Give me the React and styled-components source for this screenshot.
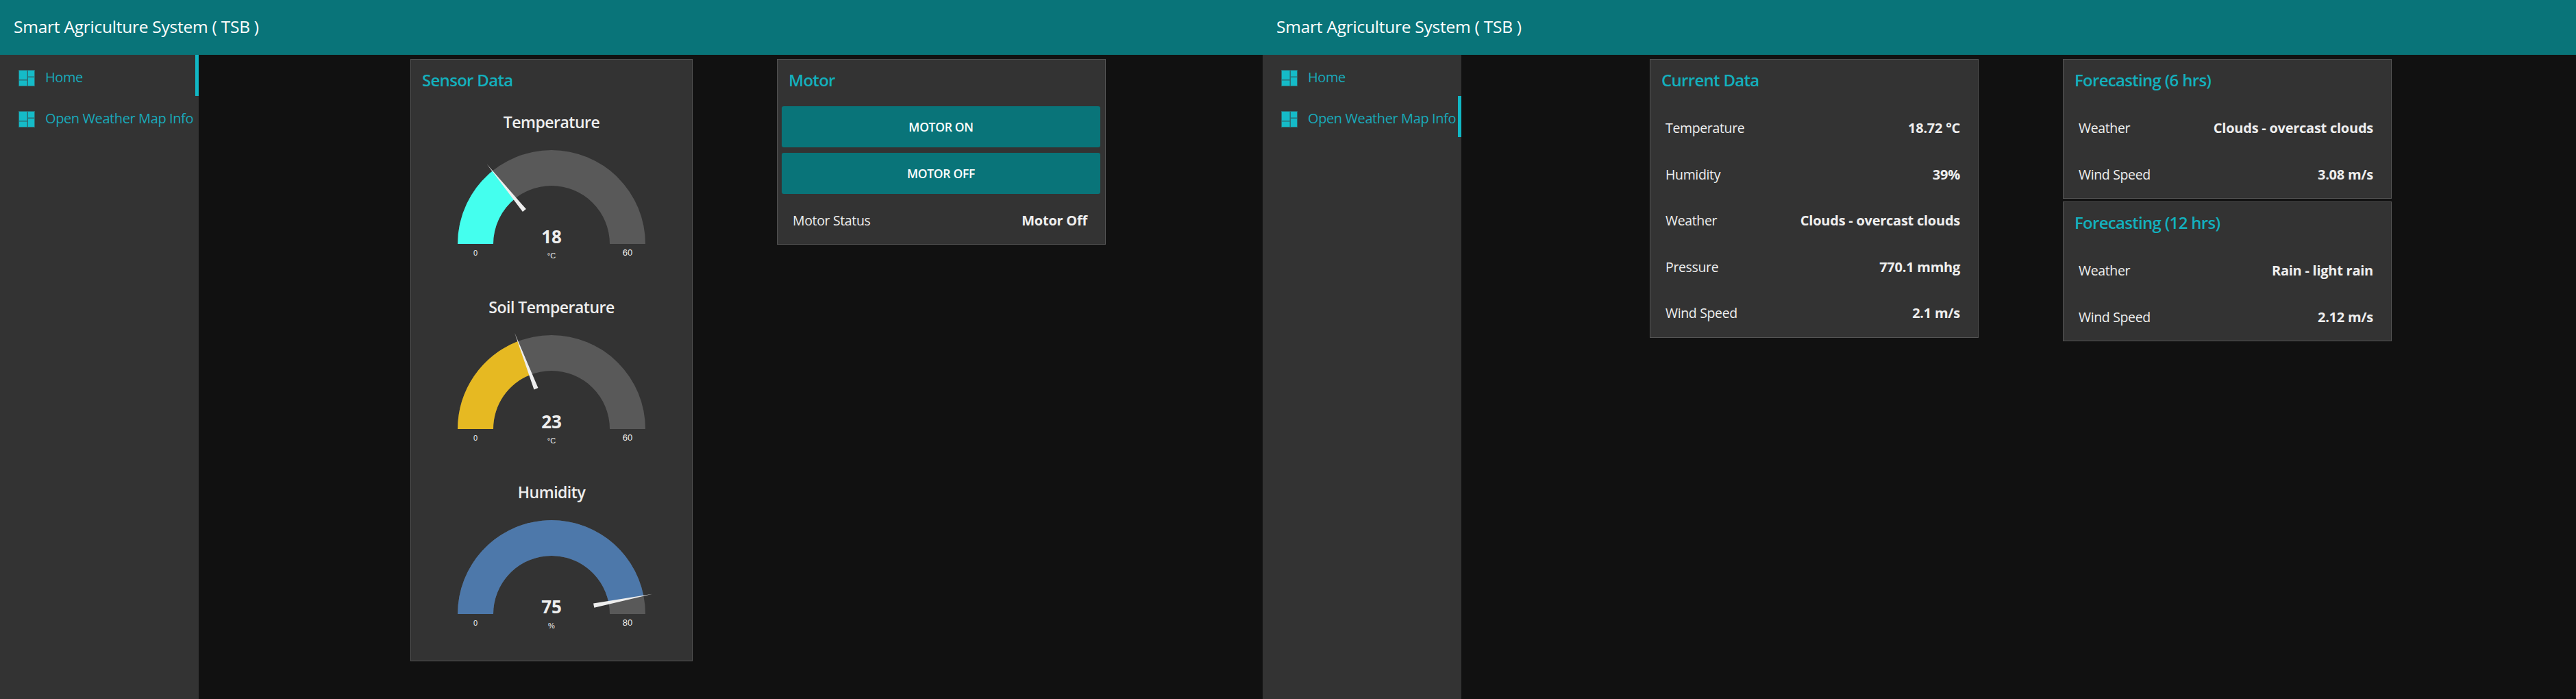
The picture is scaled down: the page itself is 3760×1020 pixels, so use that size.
import React from 'react';
import styled, { createGlobalStyle } from 'styled-components';

const GlobalStyle = createGlobalStyle`
  html, body {
    margin: 0;
    padding: 0;
    background: #111111;
  }
  * {
    box-sizing: border-box;
  }
`;

const FONT = `"Open Sans", "Noto Sans", "Liberation Sans", sans-serif`;

const Page = styled.div`
  display: flex;
  width: 3760px;
  height: 1020px;
  overflow: hidden;
  background: #111111;
  font-family: ${FONT};
`;

const Screen = styled.div`
  display: flex;
  flex-direction: column;
  flex: none;
  width: ${({ $width }) => $width}px;
  height: 100%;
`;

const Header = styled.header`
  flex: none;
  height: 80px;
  padding-left: 20px;
  background: #097479;
  color: #ffffff;
  font-size: 24.5px;
  line-height: 78px;
  letter-spacing: -0.24px;
`;

const Body = styled.div`
  display: flex;
  flex: 1;
  min-height: 0;
`;

const Sidebar = styled.nav`
  flex: none;
  width: 290px;
  background: #333333;
`;

const NavItem = styled.div`
  display: flex;
  align-items: center;
  gap: 15px;
  height: 60px;
  padding: 5px 0 0 27px;
  color: #19a9ba;
  font-size: 20px;
  letter-spacing: -0.4px;
  white-space: nowrap;
  border-right: 5px solid ${({ $active }) => ($active ? '#11b7c4' : 'transparent')};
`;

const NavIcon = styled.svg`
  flex: none;
  margin-top: 3px;
`;

const Main = styled.main`
  display: flex;
  align-items: flex-start;
  padding: 6px 0 0 ${({ $left }) => $left}px;
  gap: ${({ $gap }) => $gap}px;
`;

const Stack = styled.div`
  display: flex;
  flex-direction: column;
  gap: 4px;
`;

const Card = styled.section`
  flex: none;
  width: ${({ $width }) => $width}px;
  background: #333333;
  border: 1px solid #555555;
`;

const CardTitle = styled.h2`
  margin: 0;
  height: 67px;
  padding-left: 16px;
  color: #13b0bd;
  font-size: 24px;
  font-weight: 600;
  line-height: 60px;
  letter-spacing: -0.7px;
  white-space: nowrap;
`;

const Row = styled.div`
  display: flex;
  align-items: center;
  justify-content: space-between;
  height: 67.5px;
  padding: 0 26px ${({ $flush }) => ($flush ? 0 : 2)}px 22px;
  color: #eeeeee;
  font-size: 19.5px;
  letter-spacing: -0.35px;
`;

const RowValue = styled.span`
  font-size: 20px;
  font-weight: 700;
  letter-spacing: -0.25px;
  white-space: nowrap;
`;

const ButtonGroup = styled.div`
  display: flex;
  flex-direction: column;
  gap: 8px;
  padding: 1px 7px 5px 6px;
`;

const Button = styled.button`
  height: 60px;
  border: 0;
  border-radius: 3px;
  background: #097479;
  color: #ffffff;
  font-family: inherit;
  font-size: 17.5px;
  font-weight: 600;
  letter-spacing: -0.3px;
`;

const GaugeBlock = styled.div`
  display: flex;
  flex-direction: column;
  align-items: center;
  height: 270px;
`;

const GaugeTitle = styled.div`
  height: 50px;
  color: #eeeeee;
  font-size: 23px;
  font-weight: 600;
  line-height: 48px;
  letter-spacing: -0.5px;
  white-space: nowrap;
`;

const GaugeSvg = styled.svg`
  display: block;
  flex: none;
`;

const ScaleText = styled.text`
  fill: #eeeeee;
  font-family: "Liberation Sans", Arial, sans-serif;
  font-size: ${({ $size }) => $size}px;
  text-anchor: middle;
`;

const ValueText = styled.text`
  fill: #eeeeee;
  font-family: ${FONT};
  font-size: 26px;
  font-weight: 700;
  text-anchor: middle;
`;

// gauge centre inside its 300x190 svg
const CX = 150;
const CY = 152;
const OUTER = 137;
const INNER = 85;

const polar = (radius, angle) => {
  const rad = (angle * Math.PI) / 180;
  return [CX - radius * Math.cos(rad), CY - radius * Math.sin(rad)];
};

const ringPath = (from, to) => {
  const [ax, ay] = polar(OUTER, from);
  const [bx, by] = polar(OUTER, to);
  const [cx, cy] = polar(INNER, to);
  const [dx, dy] = polar(INNER, from);
  return `M${ax} ${ay}A${OUTER} ${OUTER} 0 0 1 ${bx} ${by}L${cx} ${cy}A${INNER} ${INNER} 0 0 0 ${dx} ${dy}Z`;
};

const needlePoints = (angle) => {
  const [tx, ty] = polar(150, angle);
  const [l1, l2] = polar(63, angle - 2.9);
  const [r1, r2] = polar(63, angle + 2.9);
  return `${tx},${ty} ${l1},${l2} ${r1},${r2}`;
};

const Gauge = ({ title, value, unit, max, angle, color }) => (
  <GaugeBlock>
    <GaugeTitle>{title}</GaugeTitle>
    <GaugeSvg width="300" height="190" viewBox="0 0 300 190">
      <path d={ringPath(0, 180)} fill="#595959" />
      <path d={ringPath(0, angle)} fill={color} />
      <polygon points={needlePoints(angle)} fill="#eeeeee" />
      <ValueText x={CX} y={CY - 1}>{value}</ValueText>
      <ScaleText x={CX - 111} y={CY + 17} $size={11}>0</ScaleText>
      <ScaleText x={CX + 111} y={CY + 17} $size={13}>{max}</ScaleText>
      <ScaleText x={CX} y={CY + 21} $size={11}>{unit}</ScaleText>
    </GaugeSvg>
  </GaugeBlock>
);

const DashboardIcon = () => (
  <NavIcon width="24" height="24" viewBox="0 0 24 24">
    <rect x="0" y="0" width="24" height="24" fill="#2c6a70" />
    <rect x="1" y="1" width="11.5" height="13" fill="#15bbc8" />
    <rect x="14" y="1" width="9" height="8.5" fill="#15bbc8" />
    <rect x="1" y="15.5" width="11.5" height="7.5" fill="#15bbc8" />
    <rect x="14" y="11" width="9" height="12" fill="#15bbc8" />
  </NavIcon>
);

const Navigation = ({ active }) => (
  <Sidebar>
    <NavItem $active={active === 0}>
      <DashboardIcon />
      Home
    </NavItem>
    <NavItem $active={active === 1}>
      <DashboardIcon />
      Open Weather Map Info
    </NavItem>
  </Sidebar>
);

const InfoCard = ({ title, rows }) => (
  <Card $width={480}>
    <CardTitle>{title}</CardTitle>
    {rows.map(([label, value]) => (
      <Row key={label}>
        <span>{label}</span>
        <RowValue>{value}</RowValue>
      </Row>
    ))}
  </Card>
);

const TITLE = 'Smart Agriculture System ( TSB )';

export default function App() {
  return (
    <>
      <GlobalStyle />
      <Page>
        <Screen $width={1843}>
          <Header>{TITLE}</Header>
          <Body>
            <Navigation active={0} />
            <Main $left={309} $gap={123}>
              <Card $width={412}>
                <CardTitle>Sensor Data</CardTitle>
                <Gauge title="Temperature" value="18" unit="°C" max="60" angle={51} color="#44ffee" />
                <Gauge title="Soil Temperature" value="23" unit="°C" max="60" angle={69} color="#e6b922" />
                <Gauge title="Humidity" value="75" unit="%" max="80" angle={168.75} color="#4d78aa" />
              </Card>
              <Card $width={480}>
                <CardTitle>Motor</CardTitle>
                <ButtonGroup>
                  <Button>MOTOR ON</Button>
                  <Button>MOTOR OFF</Button>
                </ButtonGroup>
                <Row $flush>
                  <span>Motor Status</span>
                  <RowValue>Motor Off</RowValue>
                </Row>
              </Card>
            </Main>
          </Body>
        </Screen>
        <Screen $width={1917}>
          <Header>{TITLE}</Header>
          <Body>
            <Navigation active={1} />
            <Main $left={275} $gap={123}>
              <InfoCard
                title="Current Data"
                rows={[
                  ['Temperature', '18.72 °C'],
                  ['Humidity', '39%'],
                  ['Weather', 'Clouds - overcast clouds'],
                  ['Pressure', '770.1 mmhg'],
                  ['Wind Speed', '2.1 m/s'],
                ]}
              />
              <Stack>
                <InfoCard
                  title="Forecasting (6 hrs)"
                  rows={[
                    ['Weather', 'Clouds - overcast clouds'],
                    ['Wind Speed', '3.08 m/s'],
                  ]}
                />
                <InfoCard
                  title="Forecasting (12 hrs)"
                  rows={[
                    ['Weather', 'Rain - light rain'],
                    ['Wind Speed', '2.12 m/s'],
                  ]}
                />
              </Stack>
            </Main>
          </Body>
        </Screen>
      </Page>
    </>
  );
}
